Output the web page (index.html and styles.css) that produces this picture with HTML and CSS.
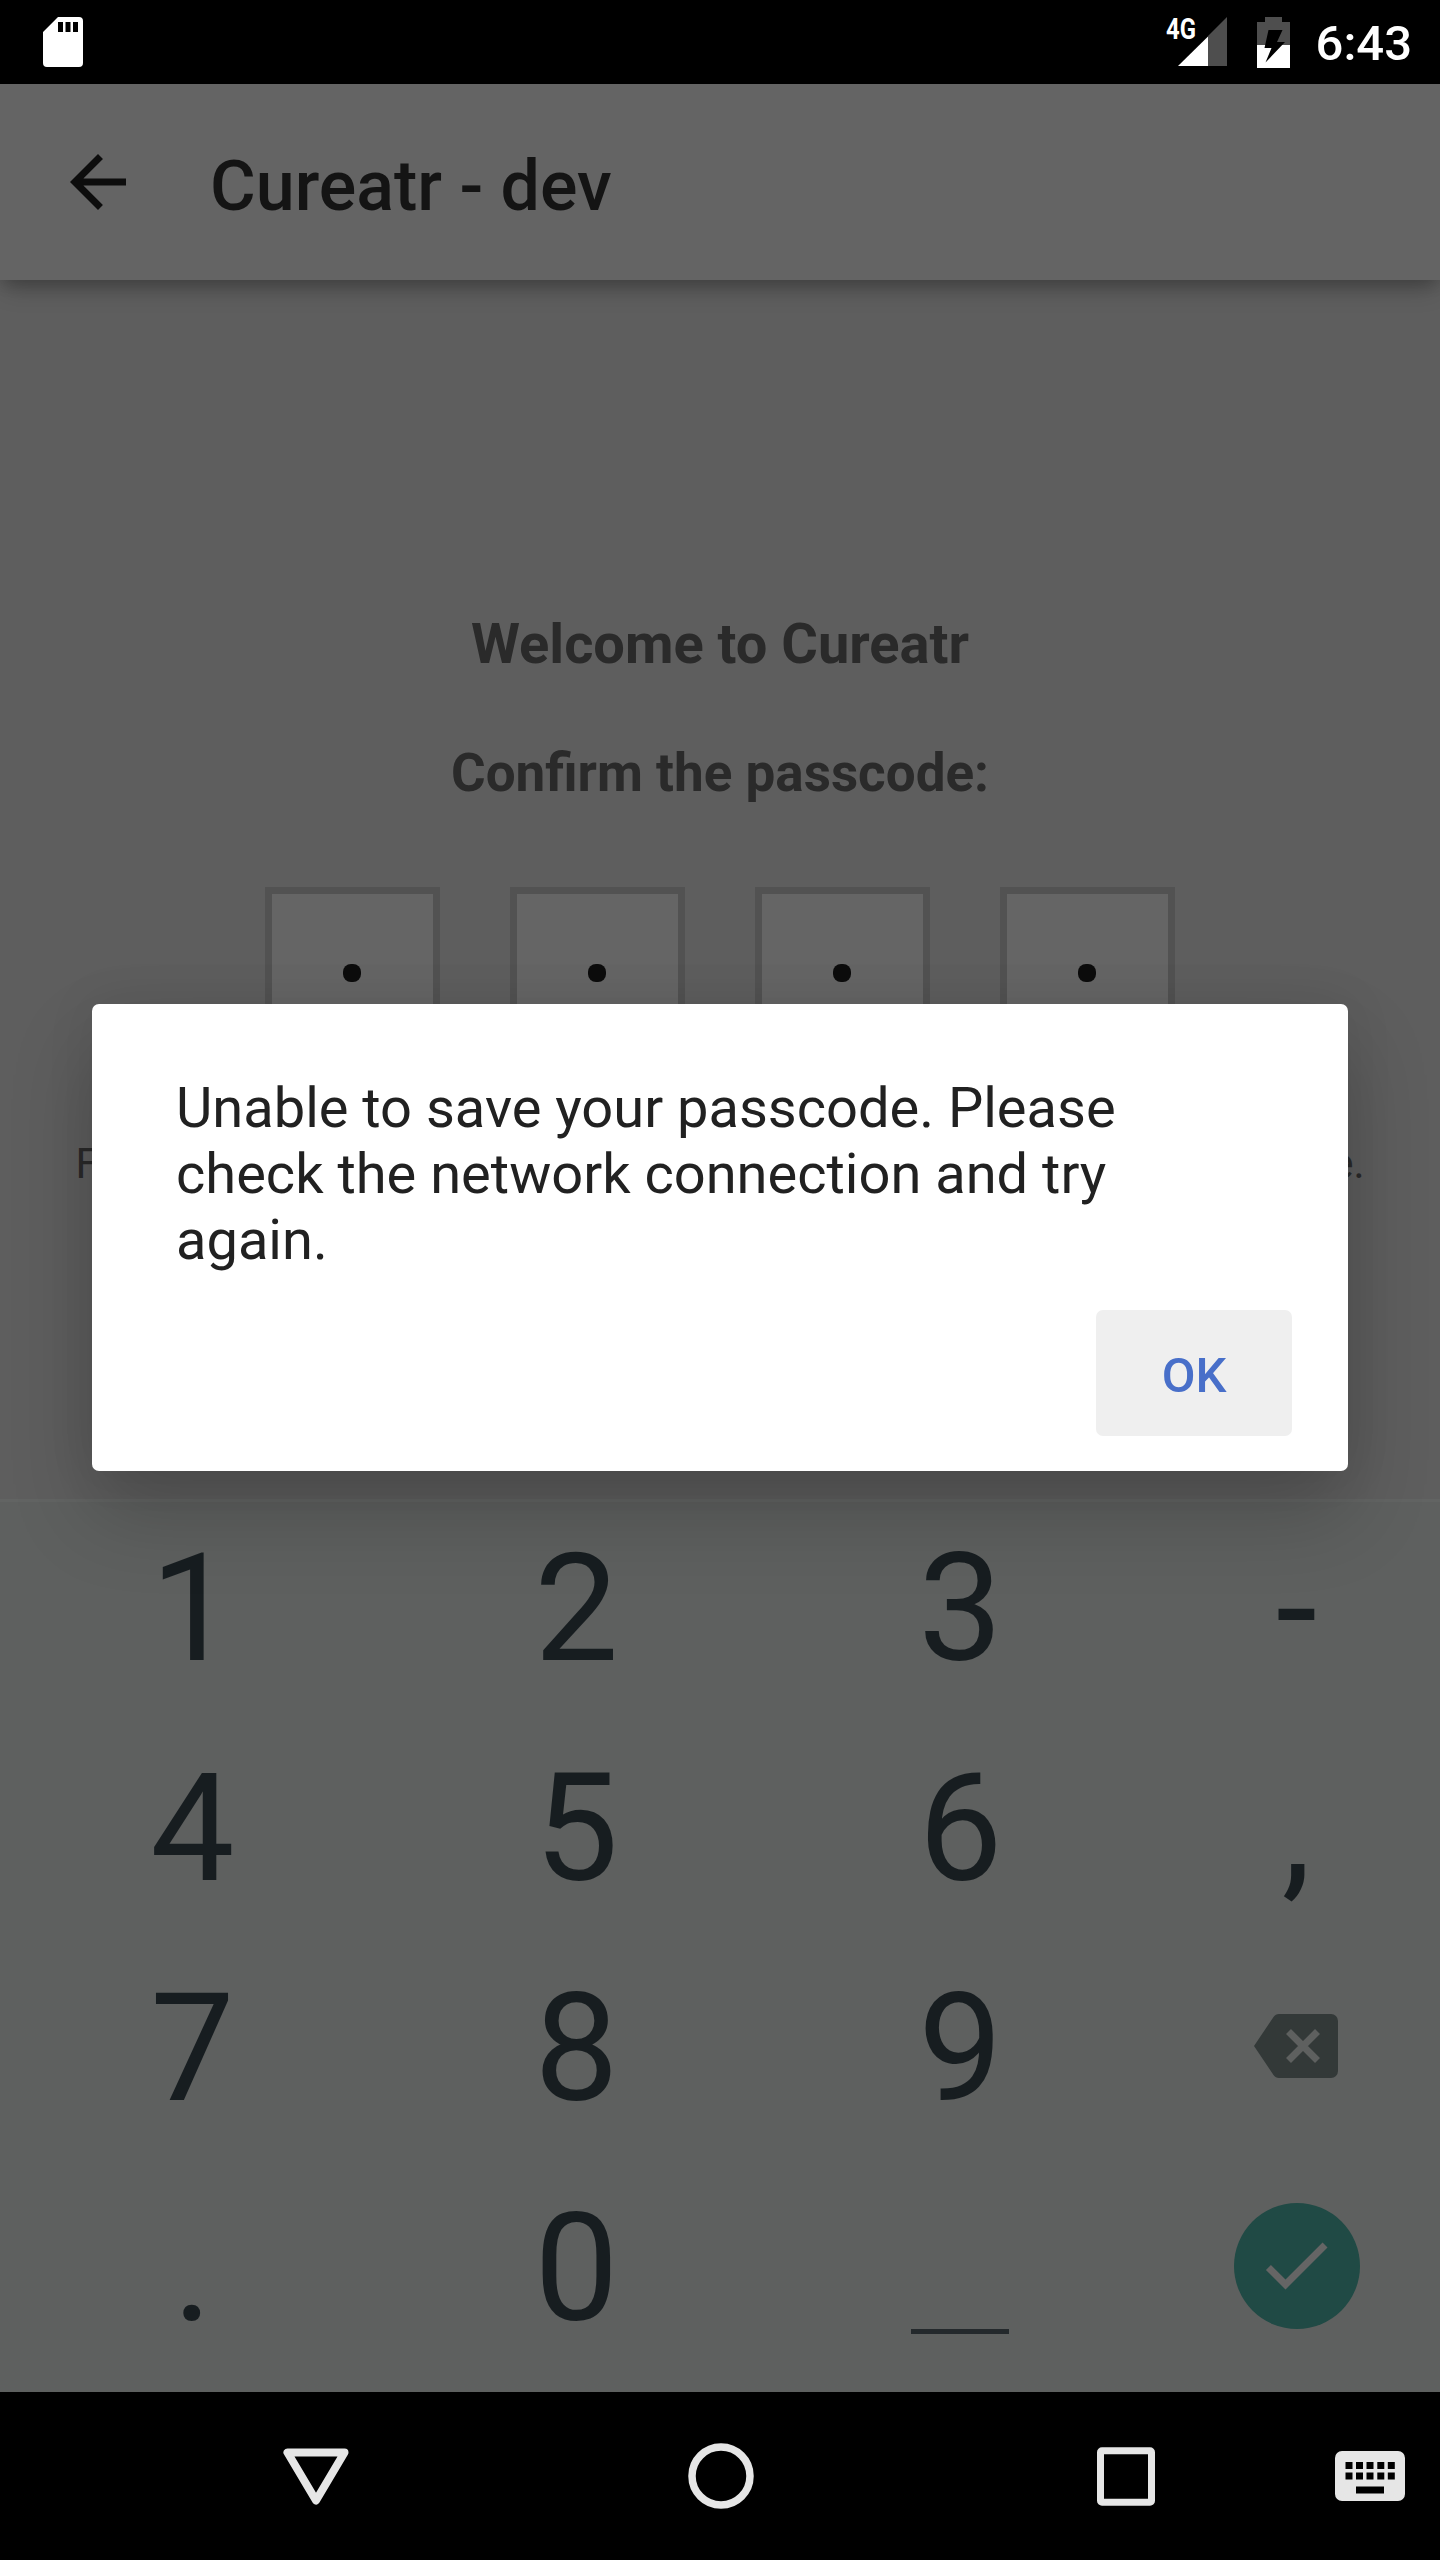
FILE: index.html
```html
<!DOCTYPE html>
<html lang="en">
<head>
<meta charset="utf-8">
<title>Cureatr - dev</title>
<link rel="stylesheet" href="styles.css">
</head>
<body>
<div class="screen">
  <header class="status">
    <svg class="sd" width="40" height="50" viewBox="0 0 40 50"><path fill="#fff" fill-rule="evenodd" d="M15 0H36a4 4 0 0 1 4 4V46a4 4 0 0 1-4 4H4a4 4 0 0 1-4-4V15zM15 5V15H20V5zM22.500 5V15H27.500V5zM30 5V15H35V5z"/></svg>
    <div class="status-right">
      <svg width="66" height="70" viewBox="-4 -10 66 70">
        <path fill="#4e4e4e" d="M61 0V49H42V19z"/>
        <path fill="#fff" d="M42 19.500V49H12z"/>
        <text class="net" x="0" y="22" textLength="30" lengthAdjust="spacingAndGlyphs">4G</text>
      </svg>
      <svg class="battery" width="33" height="51" viewBox="0 0 33 51">
        <path fill="#4e4e4e" d="M8 0H25V5H33V28H0V5H8z"/>
        <path fill="#fff" d="M0 28H33V51H0z"/>
        <path fill="#000" d="M11.500 13H25.500L20 25H28L8.500 45.500L14.500 31H7.500z"/>
      </svg>
      <span class="clock">6:43</span>
    </div>
  </header>

  <div class="toolbar">
    <svg class="back" width="84" height="84" viewBox="0 0 24 24"><path fill="#0d0d0d" d="M20 11H7.830l5.590-5.590L12 4l-8 8 8 8 1.410-1.410L7.830 13H20v-2z"/></svg>
    <h1 class="title">Cureatr - dev</h1>
  </div>

  <main class="content">
    <p class="welcome">Welcome to Cureatr</p>
    <p class="prompt">Confirm the passcode:</p>
    <div class="pins">
      <div class="pin"><i></i></div><div class="pin"><i></i></div><div class="pin"><i></i></div><div class="pin"><i></i></div>
    </div>
    <p class="hint"><span>F</span><span>e.</span></p>
  </main>

  <div class="keyboard">
    <div class="keys">
      <div class="key">1</div><div class="key">2</div><div class="key">3</div><div class="key">-</div>
      <div class="key">4</div><div class="key">5</div><div class="key">6</div><div class="key">,</div>
      <div class="key">7</div><div class="key">8</div><div class="key">9</div>
      <div><svg width="84" height="64" viewBox="0 0 84 64"><path fill="#333938" d="M25 0H77a7 7 0 0 1 7 7V57a7 7 0 0 1-7 7H25q-3.500 0-5.500-3L0 32 19.500 3Q21.500 0 25 0z"/><path stroke="#5e605f" stroke-width="7" d="M34.500 17.500L63.500 46.500M63.500 17.500L34.500 46.500"/></svg></div>
      <div class="key">.</div><div class="key">0</div><div><span class="space"></span></div>
      <div><span class="enter"><svg width="84" height="84" viewBox="0 0 24 24"><path fill="#656565" d="M9 16.170L4.830 12l-1.420 1.410L9 19 21 7l-1.410-1.410z"/></svg></span></div>
    </div>
  </div>

  <nav class="nav">
    <svg width="66" height="57" viewBox="0 0 66 57"><path fill="none" stroke="#e6e6e6" stroke-width="8" stroke-linejoin="round" d="M4.500 4.500H61.500L33 52.500z"/></svg>
    <svg width="66" height="66" viewBox="0 0 66 66"><circle cx="33" cy="33" r="29" fill="none" stroke="#e6e6e6" stroke-width="7.500"/></svg>
    <svg width="58" height="59" viewBox="0 0 58 59"><rect x="3.500" y="3.700" width="51" height="51.500" rx="1.500" fill="none" stroke="#e6e6e6" stroke-width="7"/></svg>
    <svg width="70" height="50" viewBox="0 0 70 50"><path fill="#e6e6e6" fill-rule="evenodd" d="M7 0H63a7 7 0 0 1 7 7V43a7 7 0 0 1-7 7H7a7 7 0 0 1-7-7V7a7 7 0 0 1 7-7zM10.500 11v7h7v-7zM21 11v7h7v-7zM31.500 11v7h7v-7zM42.300 11v7h7v-7zM52.800 11v7h7v-7zM10.500 21.500v7h7v-7zM21 21.500v7h7v-7zM31.500 21.500v7h7v-7zM42.300 21.500v7h7v-7zM52.800 21.500v7h7v-7zM21 35.500v7H49v-7z"/></svg>
  </nav>

  <section class="dialog" role="alertdialog">
    <p class="message">Unable to save your passcode. Please check the network connection and try again.</p>
    <button class="ok">OK</button>
  </section>
</div>
</body>
</html>
```
FILE: styles.css
```css
* { box-sizing: border-box; }
body { margin: 0; background: #5e5e5e; font-family: Roboto, "Noto Sans", sans-serif; }
p, h1 { margin: 0; }
svg { display: block; flex: none; }

.screen {
  position: relative;
  width: 1440px;
  height: 2560px;
  display: flex;
  flex-direction: column;
  overflow: hidden;
}

.status {
  height: 84px;
  flex: none;
  background: #000;
  display: flex;
  align-items: center;
  justify-content: space-between;
  padding: 0 28px 0 43px;
}
.status-right { display: flex; align-items: center; }
.net { font-size: 30px; font-weight: 700; fill: #fff; }
.battery { margin-left: 29px; }
.clock { margin-left: 26px; color: #fff; font-size: 49px; font-weight: 500; line-height: 58px; padding-top: 4px; }
.status-right { margin-right: 0; }

.toolbar {
  height: 196px;
  flex: none;
  background: #646464;
  display: flex;
  align-items: center;
  padding-left: 56px;
  box-shadow: 0 14px 22px -6px rgba(0, 0, 0, .25), 0 4px 14px rgba(0, 0, 0, .14);
  z-index: 1;
}
.title { margin-left: 70px; font-size: 70px; font-weight: 500; line-height: 82px; color: #141414; padding-top: 7px; }

.content {
  height: 1219px;
  flex: none;
  background: #5e5e5e;
  display: flex;
  flex-direction: column;
  align-items: center;
  padding-top: 331px;
}
.welcome { font-size: 56px; font-weight: 700; line-height: 66px; color: #2a2a2a; }
.prompt { margin-top: 65px; font-size: 53px; font-weight: 700; line-height: 62px; color: #2a2a2a; }
.pins { margin-top: 83px; display: flex; gap: 70px; }
.pin {
  width: 175px;
  height: 175px;
  border: 7px solid #525252;
  background: #656565;
  display: flex;
  align-items: center;
  justify-content: center;
}
.pin i { width: 18px; height: 18px; border-radius: 8px; background: #0d0d0d; margin: -3px 2px 0 0; }
.hint {
  width: 1289px;
  margin-top: 77px;
  display: flex;
  justify-content: space-between;
  font-size: 42px;
  line-height: 50px;
  color: #2a2a2a;
}

.keyboard { height: 893px; flex: none; background: #5e605f; border-top: 3px solid #626463; }
.keys {
  margin-top: -6px;
  display: grid;
  grid-template-columns: 384px 384px 384px 288px;
  grid-auto-rows: 220px;
  font-size: 150px;
  line-height: 176px;
  color: #171d20;
}
.keys > div { display: flex; align-items: center; justify-content: center; }
.keys > .key { padding: 6px 0 0 1px; }
.space { width: 98px; height: 5px; margin-top: 131px; background: #24292c; }
.enter {
  width: 126px;
  height: 126px;
  margin-left: 1px;
  border-radius: 50%;
  background: #204a45;
  display: flex;
  align-items: center;
  justify-content: center;
  padding: 0 1px 3px 0;
}

.nav {
  height: 168px;
  flex: none;
  background: #000;
  display: grid;
  grid-template-columns: 405px 405px 405px 84px;
  padding-left: 113px;
  align-items: center;
  justify-items: center;
}

.dialog {
  position: absolute;
  left: 92px;
  top: 1004px;
  width: 1256px;
  height: 467px;
  z-index: 2;
  background: #fff;
  border-radius: 7px;
  box-shadow: 0 42px 84px rgba(0, 0, 0, .2), 0 0 50px rgba(0, 0, 0, .08);
  display: flex;
  flex-direction: column;
  align-items: flex-end;
  padding: 71px 56px 35px 84px;
}
.message { align-self: stretch; padding-right: 28px; font-size: 56px; line-height: 66px; color: #212121; }
.ok {
  margin-top: auto;
  width: 196px;
  height: 126px;
  padding: 5px 0 0;
  border: 0;
  border-radius: 7px;
  background: #efefef;
  font: 500 49px/58px Roboto, sans-serif;
  color: #486fc9;
}
```
